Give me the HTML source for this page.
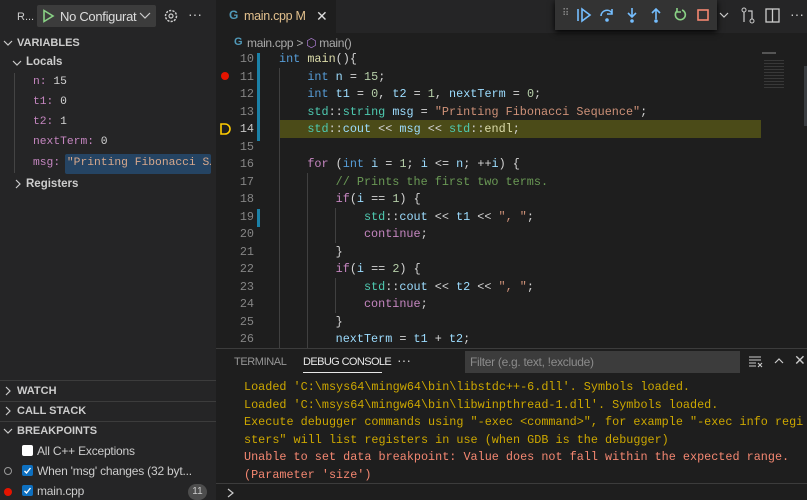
<!DOCTYPE html>
<html><head><style>
*{margin:0;padding:0;box-sizing:border-box}
body{width:807px;height:500px;background:#1e1e1e;font-family:"Liberation Sans",sans-serif;color:#ccc;position:relative;overflow:hidden;font-size:13px}
.abs{position:absolute;white-space:nowrap}
.mono{font-family:"Liberation Mono",monospace;font-size:11.8px}
.vm{font-family:"Liberation Mono",monospace;font-size:11.3px}
#side{position:absolute;left:0;top:0;width:216px;height:500px;background:#252526}
.hdr{font-weight:bold;font-size:11px;color:#ccc}
.vn{color:#c586c0}.num{color:#b5cea8}.str{color:#ce9178}
.kw{color:#569cd6}.ty{color:#4ec9b0}.ctl{color:#c586c0}.cm{color:#6a9955}.fn{color:#dcdcaa}.id{color:#9cdcfe}.pl{color:#d4d4d4}
.ln{position:absolute;left:220px;width:34px;text-align:right;color:#858585}
.code{position:absolute;left:279px;color:#d4d4d4;white-space:pre}
.con{position:absolute;left:244px;color:#cca700}
.err{color:#f48771}
.sep{position:absolute;left:0;width:216px;height:1px;background:#3c3c3c}
.ui{font-size:12px;letter-spacing:-0.2px}
</style></head><body>
<div id="side"></div>
<div class="abs" style="left:17px;top:11px;font-size:11px">R...</div>
<div class="abs" style="left:37px;top:5px;width:119px;height:22px;background:#3c3c3c;border-radius:2px;overflow:hidden"></div>
<svg class="abs" style="left:41px;top:9px" width="14" height="14"><path d="M3 1.5 L12 7 L3 12.5 Z" fill="none" stroke="#89d185" stroke-width="1.6"/></svg>
<div class="abs" style="left:60px;top:9px;width:78px;overflow:hidden;font-size:13px;letter-spacing:-0.3px;color:#ddd">No Configurat</div>
<svg class="abs" style="left:139px;top:12px" width="12" height="8"><path d="M1 1 L6 6 L11 1" fill="none" stroke="#ccc" stroke-width="1.2"/></svg>
<svg class="abs" style="left:163px;top:8px" width="16" height="16"><circle cx="8" cy="8" r="5.5" fill="none" stroke="#ccc" stroke-width="1.5" stroke-dasharray="2.2 1.2"/><circle cx="8" cy="8" r="2" fill="none" stroke="#ccc" stroke-width="1.2"/></svg>
<div class="abs" style="left:188px;top:6px;font-size:14px">···</div>
<svg class="abs" style="left:3px;top:38px" width="10" height="10"><path d="M1 3 L5 7 L9 3" fill="none" stroke="#ccc" stroke-width="1.2"/></svg>
<div class="abs hdr" style="left:17px;top:37px">VARIABLES</div>
<svg class="abs" style="left:12px;top:58px" width="10" height="10"><path d="M1 3 L5 7 L9 3" fill="none" stroke="#ccc" stroke-width="1.2"/></svg>
<div class="abs hdr" style="left:26px;top:56px;font-size:11.5px">Locals</div>
<div class="abs" style="left:14px;top:73px;width:1px;height:100px;background:#444"></div>
<div class="abs vm" style="left:33px;top:76px"><span class="vn">n:</span> <span class="pl">15</span></div>
<div class="abs vm" style="left:33px;top:96px"><span class="vn">t1:</span> <span class="pl">0</span></div>
<div class="abs vm" style="left:33px;top:116px"><span class="vn">t2:</span> <span class="pl">1</span></div>
<div class="abs vm" style="left:33px;top:136px"><span class="vn">nextTerm:</span> <span class="pl">0</span></div>
<div class="abs" style="left:65px;top:154px;width:146px;height:20px;background:#264f78;opacity:.75;border-radius:2px"></div>
<div class="abs vm" style="left:33px;top:157px;width:178px;overflow:hidden"><span class="vn">msg:</span> <span class="str" style="color:#d7a88c">"Printing Fibonacci S…</span></div>
<svg class="abs" style="left:13px;top:179px" width="10" height="10"><path d="M3 1 L7 5 L3 9" fill="none" stroke="#ccc" stroke-width="1.2"/></svg>
<div class="abs hdr" style="left:26px;top:178px;font-size:11.5px">Registers</div>
<div class="sep" style="top:380px"></div>
<svg class="abs" style="left:3px;top:386px" width="10" height="10"><path d="M3 1 L7 5 L3 9" fill="none" stroke="#ccc" stroke-width="1.2"/></svg>
<div class="abs hdr" style="left:17px;top:385px">WATCH</div>
<div class="sep" style="top:401px"></div>
<svg class="abs" style="left:3px;top:406px" width="10" height="10"><path d="M3 1 L7 5 L3 9" fill="none" stroke="#ccc" stroke-width="1.2"/></svg>
<div class="abs hdr" style="left:17px;top:405px">CALL STACK</div>
<div class="sep" style="top:421px"></div>
<svg class="abs" style="left:3px;top:426px" width="10" height="10"><path d="M1 3 L5 7 L9 3" fill="none" stroke="#ccc" stroke-width="1.2"/></svg>
<div class="abs hdr" style="left:17px;top:425px">BREAKPOINTS</div>
<div class="abs" style="left:22px;top:445px;width:11px;height:11px;background:#fff;border-radius:2px"></div>
<div class="abs ui" style="left:37px;top:444px">All C++ Exceptions</div>
<div class="abs" style="left:4px;top:467px;width:8px;height:8px;border:1px solid #999;border-radius:50%"></div>
<div class="abs" style="left:22px;top:465px;width:11px;height:11px;background:#0e70c0;border-radius:2px"></div>
<svg class="abs" style="left:22px;top:465px" width="11" height="11"><path d="M2.5 6 L4.5 8 L8.5 3" fill="none" stroke="#fff" stroke-width="1.4"/></svg>
<div class="abs ui" style="left:37px;top:464px">When 'msg' changes (32 byt...</div>
<div class="abs" style="left:4px;top:488px;width:8px;height:8px;background:#e51400;border-radius:50%"></div>
<div class="abs" style="left:22px;top:485px;width:11px;height:11px;background:#0e70c0;border-radius:2px"></div>
<svg class="abs" style="left:22px;top:485px" width="11" height="11"><path d="M2.5 6 L4.5 8 L8.5 3" fill="none" stroke="#fff" stroke-width="1.4"/></svg>
<div class="abs ui" style="left:37px;top:484px">main.cpp</div>
<div class="abs" style="left:188px;top:484px;width:19px;height:16px;background:#4d4d4d;border-radius:8px;font-size:10px;text-align:center;line-height:16px">11</div>

<div class="abs" style="left:216px;top:0;width:591px;height:33px;background:#252526"></div>
<div class="abs" style="left:216px;top:0;width:120px;height:33px;background:#1e1e1e"></div>
<div class="abs" style="left:229px;top:8px;color:#519aba;font-weight:bold;font-size:12px">G</div>
<div class="abs" style="left:244px;top:9px;font-size:12.5px;letter-spacing:-0.3px;color:#e2c08d">main.cpp M</div>
<div class="abs" style="left:316px;top:8px;font-size:14px;color:#ddd">✕</div>
<div class="abs" style="left:555px;top:0;width:162px;height:30px;background:#333;box-shadow:0 2px 6px #000"></div>
<div class="abs" style="left:562px;top:8px;font-size:10px;color:#888;letter-spacing:-1px">⠿</div>
<svg class="abs" style="left:576px;top:7px;width:140px;height:16px" viewBox="0 0 140 16">
<path d="M2 2 V14 M6 2 L14 8 L6 14 Z" fill="none" stroke="#75beff" stroke-width="1.6"/>
<path d="M25 9 A6 6 0 0 1 36 6 M36 2 V7 H31" fill="none" stroke="#75beff" stroke-width="1.6"/><circle cx="31" cy="13" r="1.8" fill="#75beff"/>
<path d="M56 1 V9 M52 6 L56 10 L60 6" fill="none" stroke="#75beff" stroke-width="1.6"/><circle cx="56" cy="14" r="1.8" fill="#75beff"/>
<path d="M80 12 V3 M76 6 L80 2 L84 6" fill="none" stroke="#75beff" stroke-width="1.6"/><circle cx="80" cy="14" r="1.8" fill="#75beff"/>
<path d="M101 4 A5 5 0 1 0 106 3 M101 1 V5 H105" fill="none" stroke="#89d185" stroke-width="1.6"/>
<rect x="122" y="3" width="10" height="10" fill="none" stroke="#f48771" stroke-width="1.6"/>
</svg>
<svg class="abs" style="left:719px;top:12px" width="10" height="8"><path d="M1 1 L5 5 L9 1" fill="none" stroke="#ccc" stroke-width="1.2"/></svg>
<svg class="abs" style="left:740px;top:7px" width="16" height="17"><circle cx="4" cy="3" r="2" fill="none" stroke="#ccc"/><circle cx="12" cy="14" r="2" fill="none" stroke="#ccc"/><path d="M4 5 V15 M12 12 V4 H8" fill="none" stroke="#ccc" stroke-width="1.2"/></svg>
<svg class="abs" style="left:765px;top:8px" width="15" height="15"><rect x="1" y="1" width="13" height="13" fill="none" stroke="#ccc" stroke-width="1.3"/><path d="M7.5 1 V14" stroke="#ccc" stroke-width="1.3"/></svg>
<div class="abs" style="left:790px;top:6px;font-size:14px">···</div>
<div class="abs" style="left:234px;top:36px;color:#519aba;font-weight:bold;font-size:11px">G</div>
<div class="abs" style="left:247px;top:36px;font-size:12px;letter-spacing:-0.3px;color:#aaa">main.cpp &gt; <span style="color:#b180d7">⬡</span> main()</div>

<div class="abs" style="left:279px;top:120px;width:482px;height:18px;background:#4b4b18"></div>
<div class="abs" style="left:257px;top:53px;width:3px;height:88px;background:#1b81a8"></div>
<div class="abs" style="left:257px;top:209px;width:3px;height:18px;background:#1b81a8"></div>
<div class="abs" style="left:221px;top:72px;width:8px;height:8px;background:#e51400;border-radius:50%"></div>
<svg class="abs" style="left:219px;top:122px" width="13" height="14"><path d="M2 2 H6 A5 5 0 0 1 6 12 H2 Z" fill="none" stroke="#ffcc00" stroke-width="1.6"/></svg>
<div class="abs" style="left:279px;top:68px;width:1px;height:280px;background:#404040"></div>
<div class="abs" style="left:307px;top:173px;width:1px;height:175px;background:#404040"></div>
<div class="abs" style="left:335px;top:208px;width:1px;height:35px;background:#404040"></div>
<div class="abs" style="left:335px;top:278px;width:1px;height:35px;background:#404040"></div>
<div class="mono">
<div class="ln" style="top:52px">10</div><div class="ln" style="top:69.5px">11</div><div class="ln" style="top:87px">12</div><div class="ln" style="top:104.5px">13</div><div class="ln" style="top:122px;color:#c6c6c6">14</div><div class="ln" style="top:139.5px">15</div><div class="ln" style="top:157px">16</div><div class="ln" style="top:174.5px">17</div><div class="ln" style="top:192px">18</div><div class="ln" style="top:209.5px">19</div><div class="ln" style="top:227px">20</div><div class="ln" style="top:244.5px">21</div><div class="ln" style="top:262px">22</div><div class="ln" style="top:279.5px">23</div><div class="ln" style="top:297px">24</div><div class="ln" style="top:314.5px">25</div><div class="ln" style="top:332px">26</div>
<div class="code" style="top:52px"><span class="kw">int</span> <span class="fn">main</span>(){</div>
<div class="code" style="top:69.5px">    <span class="kw">int</span> <span class="id">n</span> = <span class="num">15</span>;</div>
<div class="code" style="top:87px">    <span class="kw">int</span> <span class="id">t1</span> = <span class="num">0</span>, <span class="id">t2</span> = <span class="num">1</span>, <span class="id">nextTerm</span> = <span class="num">0</span>;</div>
<div class="code" style="top:104.5px">    <span class="ty">std</span>::<span class="ty">string</span> <span class="id">msg</span> = <span class="str">"Printing Fibonacci Sequence"</span>;</div>
<div class="code" style="top:122px">    <span class="ty">std</span>::<span class="id">cout</span> &lt;&lt; <span class="id">msg</span> &lt;&lt; <span class="ty">std</span>::<span class="fn">endl</span>;</div>
<div class="code" style="top:157px">    <span class="ctl">for</span> (<span class="kw">int</span> <span class="id">i</span> = <span class="num">1</span>; <span class="id">i</span> &lt;= <span class="id">n</span>; ++<span class="id">i</span>) {</div>
<div class="code" style="top:174.5px">        <span class="cm">// Prints the first two terms.</span></div>
<div class="code" style="top:192px">        <span class="ctl">if</span>(<span class="id">i</span> == <span class="num">1</span>) {</div>
<div class="code" style="top:209.5px">            <span class="ty">std</span>::<span class="id">cout</span> &lt;&lt; <span class="id">t1</span> &lt;&lt; <span class="str">", "</span>;</div>
<div class="code" style="top:227px">            <span class="ctl">continue</span>;</div>
<div class="code" style="top:244.5px">        }</div>
<div class="code" style="top:262px">        <span class="ctl">if</span>(<span class="id">i</span> == <span class="num">2</span>) {</div>
<div class="code" style="top:279.5px">            <span class="ty">std</span>::<span class="id">cout</span> &lt;&lt; <span class="id">t2</span> &lt;&lt; <span class="str">", "</span>;</div>
<div class="code" style="top:297px">            <span class="ctl">continue</span>;</div>
<div class="code" style="top:314.5px">        }</div>
<div class="code" style="top:332px">        <span class="id">nextTerm</span> = <span class="id">t1</span> + <span class="id">t2</span>;</div>
</div>
<div class="abs" style="left:762px;top:52px;width:14px;height:2px;background:#555"></div>
<div class="abs" style="left:764px;top:60px;width:20px;height:30px;background:repeating-linear-gradient(#444 0 1px,transparent 1px 3px);opacity:.7"></div>
<div class="abs" style="left:804px;top:66px;width:3px;height:60px;background:#3a3d41"></div>

<div class="abs" style="left:216px;top:348px;width:591px;height:152px;background:#1e1e1e;border-top:1px solid #3c3c3c"></div>
<div class="abs" style="left:234px;top:356px;font-size:11px;letter-spacing:-0.4px;color:#969696">TERMINAL</div>
<div class="abs" style="left:303px;top:356px;font-size:11px;letter-spacing:-0.6px;color:#e7e7e7">DEBUG CONSOLE</div>
<div class="abs" style="left:303px;top:372px;width:79px;height:1px;background:#e7e7e7"></div>
<div class="abs" style="left:397px;top:352px;font-size:14px">···</div>
<div class="abs" style="left:465px;top:351px;width:275px;height:22px;background:#3c3c3c"></div>
<div class="abs" style="left:470px;top:355px;font-size:12px;letter-spacing:-0.3px;color:#8b8b8b">Filter (e.g. text, !exclude)</div>
<svg class="abs" style="left:748px;top:355px" width="15" height="13"><path d="M1 2 H13 M1 5 H13 M1 8 H8 M1 11 H8 M10 8 L14 12 M14 8 L10 12" stroke="#ccc" stroke-width="1.1"/></svg>
<svg class="abs" style="left:773px;top:356px" width="12" height="10"><path d="M2 7 L6 3 L10 7" fill="none" stroke="#ccc" stroke-width="1.2"/></svg>
<div class="abs" style="left:794px;top:352px;font-size:14px">✕</div>
<div class="mono">
<div class="con abs" style="top:380px">Loaded 'C:\msys64\mingw64\bin\libstdc++-6.dll'. Symbols loaded.</div>
<div class="con abs" style="top:397.5px">Loaded 'C:\msys64\mingw64\bin\libwinpthread-1.dll'. Symbols loaded.</div>
<div class="con abs" style="top:415px">Execute debugger commands using "-exec &lt;command&gt;", for example "-exec info regi</div>
<div class="con abs" style="top:432.5px">sters" will list registers in use (when GDB is the debugger)</div>
<div class="con abs err" style="top:450px">Unable to set data breakpoint: Value does not fall within the expected range.</div>
<div class="con abs err" style="top:467.5px">(Parameter 'size')</div>
</div>
<div class="abs" style="left:216px;top:483px;width:591px;height:1px;background:#3c3c3c"></div>
<svg class="abs" style="left:227px;top:488px" width="8" height="10"><path d="M1 1 L6 5 L1 9" fill="none" stroke="#ccc" stroke-width="1.2"/></svg>
</body></html>
